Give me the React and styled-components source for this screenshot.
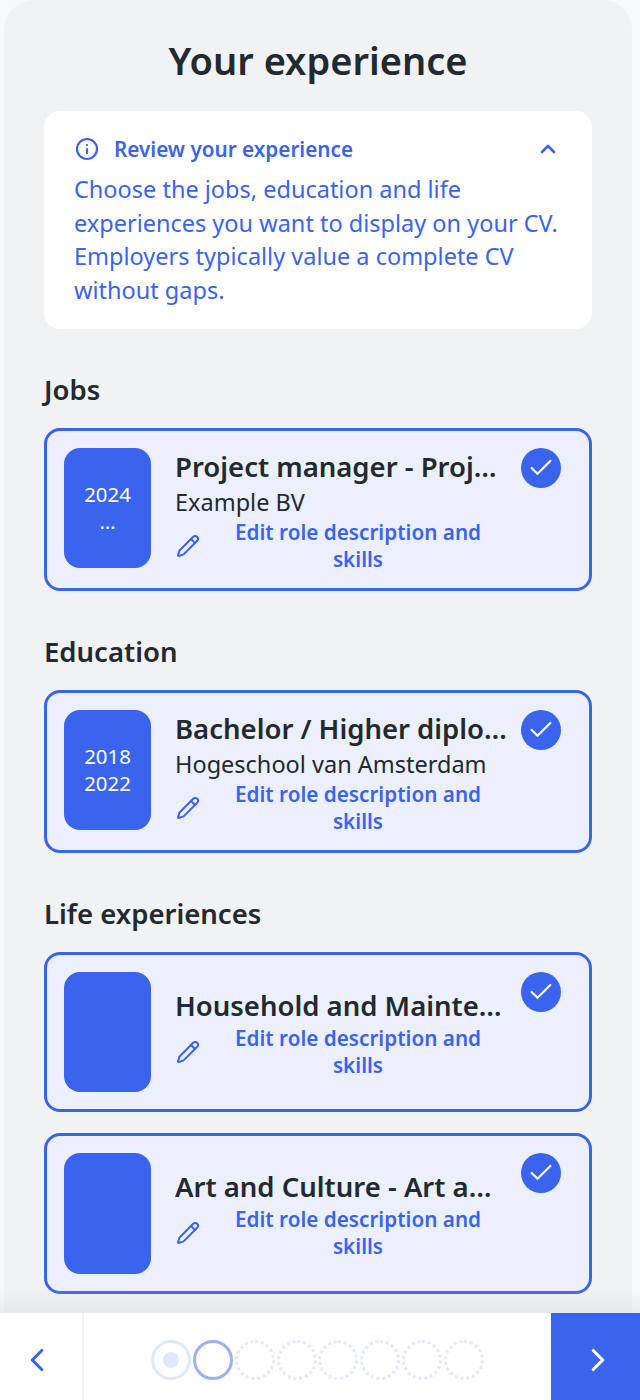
import styled, {createGlobalStyle} from 'styled-components';
import {Check, ChevronLeft, ChevronRight, ChevronUp, Info, Pencil} from 'lucide-react';

const GlobalStyle = createGlobalStyle`
html, body {
    margin: 0;
    padding: 0;
    background: #f8f9fa;
}
* {
    box-sizing: border-box;
}
`;

const STEPS = ['current', 'next', 'todo', 'todo', 'todo', 'todo', 'todo', 'todo'];

const ExperienceCard = ({from, to, title, subtitle}) => {
    return (
        <Card>
            <DateBlock>
                {from && <span>{from}</span>}
                {to && <span>{to}</span>}
            </DateBlock>
            <CardBody>
                <CardTitle>{title}</CardTitle>
                {subtitle && <CardSubtitle>{subtitle}</CardSubtitle>}
                <EditRow>
                    <PencilIcon size={24} strokeWidth={2} color="#3b64ee" />
                    <EditText>Edit role description and skills</EditText>
                </EditRow>
            </CardBody>
            <CheckMark>
                <Check size={28} strokeWidth={1.9} color="#ffffff" />
            </CheckMark>
        </Card>
    );
}

const App = () => {
    return (
        <Page>
            <GlobalStyle />
            <Panel>
                <Title>Your experience</Title>
                <InfoCard>
                    <InfoHeader>
                        <Info size={24} strokeWidth={2.2} />
                        <InfoTitle>Review your experience</InfoTitle>
                        <ChevronUp size={24} strokeWidth={2.6} />
                    </InfoHeader>
                    <InfoText>
                        Choose the jobs, education and life experiences you want to display on your CV. Employers typically value a complete CV without gaps.
                    </InfoText>
                </InfoCard>

                <Section>
                    <SectionTitle>Jobs</SectionTitle>
                    <ExperienceCard from="2024" to="…" title="Project manager - Project lead" subtitle="Example BV" />
                </Section>
                <Section>
                    <SectionTitle>Education</SectionTitle>
                    <ExperienceCard from="2018" to="2022" title="Bachelor / Higher diploma" subtitle="Hogeschool van Amsterdam" />
                </Section>
                <Section>
                    <SectionTitle>Life experiences</SectionTitle>
                    <CardList>
                        <ExperienceCard title="Household and Maintenance" />
                        <ExperienceCard title="Art and Culture - Art and design" />
                    </CardList>
                </Section>
            </Panel>
            <Footer>
                <BackButton>
                    <ChevronLeft size={38} strokeWidth={2} color="#3b64ee" />
                </BackButton>
                <Steps>
                    {STEPS.map((state, i) => (
                        <Step key={i} $state={state} />
                    ))}
                </Steps>
                <NextButton>
                    <ChevronRight size={38} strokeWidth={2} color="#ffffff" />
                </NextButton>
            </Footer>
        </Page>
    );
}

export default App;

const Page = styled.div`
width: 640px;
height: 1400px;
display: flex;
flex-direction: column;
overflow: hidden;
font-family: "Noto Sans", sans-serif;
`;
const Panel = styled.main`
flex: 1;
min-height: 0;
margin: 0 8px 0 4px;
padding: 37px 40px 0;
background: #f1f2f4;
border-radius: 30px 30px 0 0;
overflow: hidden;
`;
const Title = styled.h1`
margin: 0 0 28px;
font-size: 38px;
line-height: 46px;
font-weight: 600;
text-align: center;
color: #22292f;
`;
const InfoCard = styled.section`
height: 218px;
padding: 24px 30px 0;
background: #ffffff;
border-radius: 16px;
color: #3b64ee;
`;
const InfoHeader = styled.div`
height: 28px;
padding: 0 2px 0 1px;
display: flex;
align-items: center;
gap: 15px;
`;
const InfoTitle = styled.div`
flex: 1;
font-size: 20.7px;
font-weight: 600;
`;
const InfoText = styled.p`
margin: 10px 0 0;
font-size: 23.5px;
line-height: 33.5px;
`;
const Section = styled.section`
margin-top: 42.5px;
&:first-of-type {
    margin-top: 43px;
}
`;
const SectionTitle = styled.h2`
margin: 0 0 20px;
font-size: 27.5px;
line-height: 36px;
font-weight: 600;
color: #22292f;
`;
const CardList = styled.div`
display: flex;
flex-direction: column;
gap: 21px;
`;
const Card = styled.article`
display: flex;
align-items: center;
padding: 17px 28px 17px 17px;
background: #ecf0fc;
border: 3px solid #3b64ee;
border-radius: 16px;
`;
const DateBlock = styled.div`
width: 87px;
height: 120.5px;
flex-shrink: 0;
align-self: flex-start;
display: flex;
flex-direction: column;
align-items: center;
justify-content: center;
background: #3b64ee;
border-radius: 16px;
font-size: 20.4px;
line-height: 27px;
color: #ffffff;
`;
const CardBody = styled.div`
flex: 1;
min-width: 0;
margin: 0 13px -1.5px 24px;
`;
const CardTitle = styled.div`
font-size: 27.5px;
line-height: 38px;
font-weight: 600;
color: #22292f;
white-space: nowrap;
overflow: hidden;
text-overflow: ellipsis;
`;
const CardSubtitle = styled.div`
font-size: 23.5px;
line-height: 33px;
color: #22292f;
`;
const EditRow = styled.div`
display: flex;
align-items: center;
`;
const PencilIcon = styled(Pencil)`
flex-shrink: 0;
margin-left: 1px;
`;
const EditText = styled.div`
flex: 1;
padding: 0 10px 0 18px;
font-size: 20.7px;
line-height: 27px;
font-weight: 600;
text-align: center;
color: #3b64ee;
`;
const CheckMark = styled.div`
width: 40px;
height: 40px;
flex-shrink: 0;
align-self: flex-start;
display: flex;
align-items: center;
justify-content: center;
background: #3b64ee;
border-radius: 50%;
`;
const Footer = styled.footer`
position: relative;
height: 87px;
flex-shrink: 0;
display: flex;
background: #ffffff;

&::before {
    content: '';
    position: absolute;
    left: 0;
    right: 0;
    top: -24px;
    height: 24px;
    background: linear-gradient(rgba(214, 221, 221, 0), rgba(214, 221, 221, 0.45));
}
`;
const BackButton = styled.div`
width: 84px;
padding: 6px 9px 0 0;
display: flex;
align-items: center;
justify-content: center;
border-right: 2px solid #f1f2f4;
`;
const Steps = styled.div`
flex: 1;
padding: 6px 0 0 67px;
display: flex;
align-items: center;
gap: 1.86px;
`;
const Step = styled.div`
position: relative;
width: 40px;
height: 40px;
flex-shrink: 0;
border-radius: 50%;
border: 3px ${p => p.$state === 'todo' ? 'dotted' : 'solid'} ${p => p.$state === 'next' ? '#9db2f6' : '#e2e8fb'};

&::after {
    content: '';
    display: ${p => p.$state === 'current' ? 'block' : 'none'};
    position: absolute;
    inset: 9px;
    border-radius: 50%;
    background: #e2e8fb;
}
`;
const NextButton = styled.div`
width: 89px;
padding: 6px 0 0 4px;
display: flex;
align-items: center;
justify-content: center;
background: #3b64ee;
`;
